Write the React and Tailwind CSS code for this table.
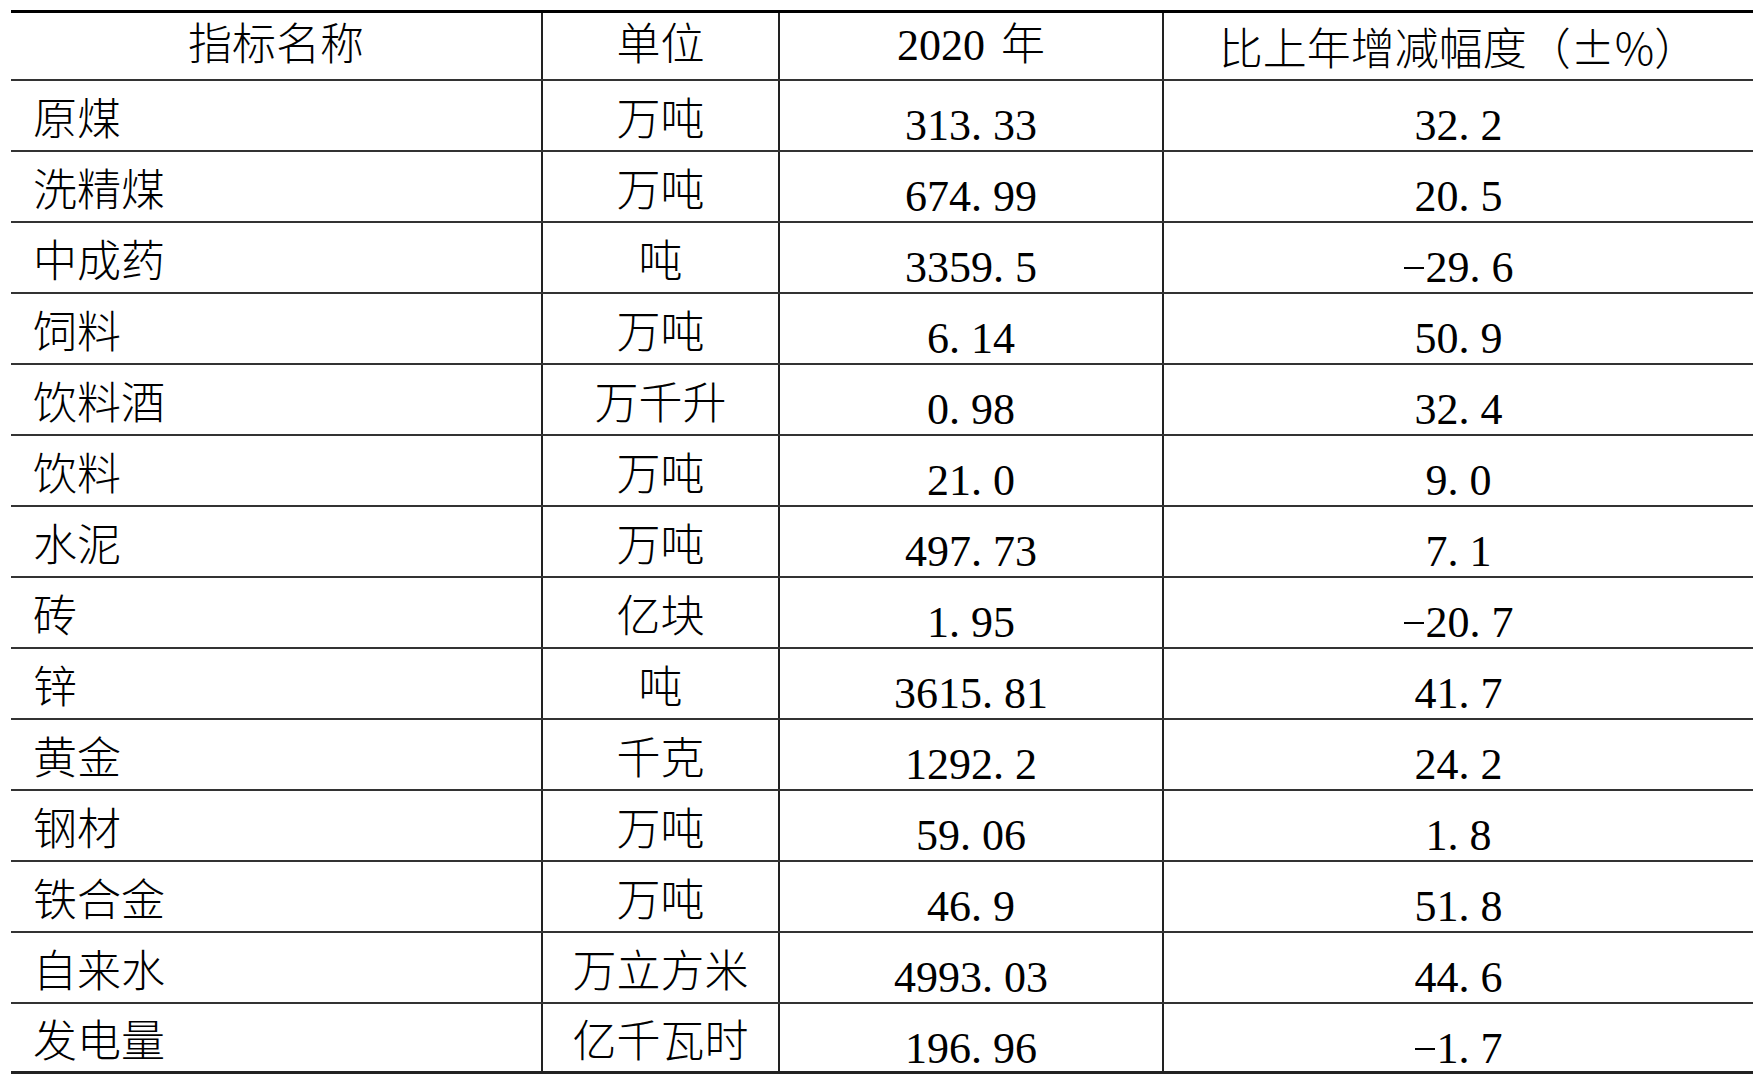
const rows = [
  ["原煤", "万吨", "313.33", "32.2"],
  ["洗精煤", "万吨", "674.99", "20.5"],
  ["中成药", "吨", "3359.5", "-29.6"],
  ["饲料", "万吨", "6.14", "50.9"],
  ["饮料酒", "万千升", "0.98", "32.4"],
  ["饮料", "万吨", "21.0", "9.0"],
  ["水泥", "万吨", "497.73", "7.1"],
  ["砖", "亿块", "1.95", "-20.7"],
  ["锌", "吨", "3615.81", "41.7"],
  ["黄金", "千克", "1292.2", "24.2"],
  ["钢材", "万吨", "59.06", "1.8"],
  ["铁合金", "万吨", "46.9", "51.8"],
  ["自来水", "万立方米", "4993.03", "44.6"],
  ["发电量", "亿千瓦时", "196.96", "-1.7"],
];

// half-width digits like the original song-style face: dot and minus get a full digit cell
const Num = ({ value }) => (
  <span className="font-['Liberation_Serif',serif] text-[44px] leading-none">
    {value.split("").map((c, i) => {
      if (c === ".") {
        return (
          <span key={i} className="inline-block w-[22px] text-left">
            .
          </span>
        );
      }
      if (c === "-") {
        return <span key={i} className="inline-block w-[20px] h-[2px] mr-[2px] bg-black align-[0.3em]"></span>;
      }
      return <span key={i}>{c}</span>;
    })}
  </span>
);

const App = () => {
  return (
    <div className="w-full h-screen overflow-hidden bg-white text-black pt-[10px] pl-[11px]">
      <div className="w-[1742px] border-t-[3px] border-black">
        {/* header */}
        <div className="grid grid-cols-[532px_237px_384px_589px] h-[68px] border-b-2 border-[#333] font-['Liberation_Serif','Noto_Sans_CJK_SC',serif] font-light text-[44px] leading-none">
          <div className="flex items-center justify-center border-r-2 border-[#222]">指标名称</div>
          <div className="flex items-center justify-center border-r-2 border-[#222]">单位</div>
          <div className="flex items-center justify-center border-r-2 border-[#222]">
            2020<span className="inline-block w-[16px]"></span>年
          </div>
          <div className="flex items-center justify-center font-['Noto_Sans_CJK_SC',sans-serif]">
            比上年增减幅度（±%）
          </div>
        </div>

        {/* body */}
        {rows.map((r, i) => (
          <div
            key={r[0]}
            className={
              i === rows.length - 1
                ? "grid grid-cols-[532px_237px_384px_589px] h-[70px] border-b-[3px] border-[#222]"
                : "grid grid-cols-[532px_237px_384px_589px] h-[71px] border-b-2 border-[#333]"
            }
          >
            <div className="flex items-center pl-[22px] border-r-2 border-[#222] font-['Noto_Sans_CJK_SC',sans-serif] font-light text-[44px] leading-none">
              {r[0]}
            </div>
            <div className="flex items-center justify-center border-r-2 border-[#222] font-['Noto_Sans_CJK_SC',sans-serif] font-light text-[44px] leading-none">
              {r[1]}
            </div>
            <div className="flex items-start justify-center pt-[23px] border-r-2 border-[#222]">
              <Num value={r[2]} />
            </div>
            <div className="flex items-start justify-center pt-[23px]">
              <Num value={r[3]} />
            </div>
          </div>
        ))}
      </div>
    </div>
  );
};

export default App;
